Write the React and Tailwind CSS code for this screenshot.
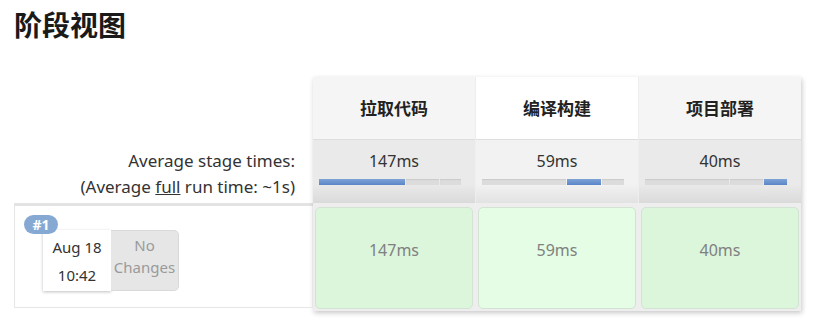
import React from 'react';

const stages = [
  {
    name: '拉取代码',
    avg: '147ms',
    time: '147ms',
    head: 'bg-[#f5f5f5]',
    avgBg: 'bg-gradient-to-b from-[#eaeaea] from-70% to-[#dadada]',
    cell: 'bg-[#dcf6dc]',
    bar: [['blue', 86], ['gray', 33], ['gray', 21]],
  },
  {
    name: '编译构建',
    avg: '59ms',
    time: '59ms',
    head: 'bg-white',
    avgBg: 'bg-gradient-to-b from-[#f2f2f2] from-70% to-[#e2e2e2]',
    cell: 'bg-[#e4fde4]',
    bar: [['gray', 85], ['blue', 34], ['gray', 22]],
  },
  {
    name: '项目部署',
    avg: '40ms',
    time: '40ms',
    head: 'bg-[#f5f5f5]',
    avgBg: 'bg-gradient-to-b from-[#eaeaea] from-70% to-[#dadada]',
    cell: 'bg-[#dcf6dc]',
    bar: [['gray', 84], ['gray', 33], ['blue', 23]],
  },
];

const latin = { fontFamily: '"Noto Sans", "Noto Sans CJK SC", sans-serif' };
const cjk = { fontFamily: '"Noto Sans CJK SC", "Noto Sans", sans-serif' };

const Bar = ({ parts }) => (
  <div className="flex h-[6px] w-[142px] gap-px">
    {parts.map(([kind, w], i) => (
      <div
        key={i}
        style={{ width: w }}
        className={
          kind === 'blue'
            ? 'h-full bg-gradient-to-b from-[#7ea3d6] to-[#5a85c8]'
            : 'h-full bg-[#dcdcdc] shadow-[inset_0_1px_1px_rgba(0,0,0,0.08)]'
        }
      />
    ))}
  </div>
);

const App = () => {
  return (
    <div className="w-[830px] h-[333px] bg-white overflow-hidden pl-[14px] pt-[4px] text-[#333]" style={latin}>
      <h1 className="text-[28px] leading-[40px] font-bold text-[#1a1a1a] mb-[33px]" style={cjk}>
        阶段视图
      </h1>

      <div className="flex">
        {/* left labels */}
        <div className="w-[299px] flex flex-col">
          <div className="h-[62px]" />
          <div className="h-[64px] flex flex-col items-end justify-center pr-[18px] text-[17px] leading-[26px] pt-[6px]">
            <div>Average stage times:</div>
            <div>
              (Average <span className="underline">full</span> run time: ~1s)
            </div>
          </div>
          <div className="border-t-[3px] border-[#e3e3e3]">
            <div className="h-[102px] border border-[#e6e6e6] border-t-0 relative">
              <div className="absolute left-[9px] top-[9px] z-10 h-[19px] w-[34px] rounded-full bg-[#86a9d3] text-white text-[14px] font-bold leading-[19px] text-center">
                #1
              </div>
              <div className="flex pl-[28px] pt-[24px]">
                <div className="w-[68px] h-[61px] bg-white shadow-[0_1px_3px_rgba(0,0,0,0.25)] flex flex-col items-center justify-center text-[15px] leading-[28px] text-[#333]">
                  <div>Aug 18</div>
                  <div>10:42</div>
                </div>
                <div className="w-[68px] h-[61px] bg-[#e6e6e6] border border-[#d9d9d9] border-l-0 rounded-r-[5px] flex flex-col items-center justify-start pt-[3px] text-[15px] leading-[22px] text-[#9a9a9a]">
                  <div>No</div>
                  <div>Changes</div>
                </div>
              </div>
            </div>
          </div>
        </div>

        {/* stage table */}
        <div className="flex w-[488px] bg-[#eeeeee] shadow-[1px_2px_5px_rgba(0,0,0,0.22)] gap-px">
          {stages.map((s) => (
            <div key={s.name} className="flex-1 flex flex-col">
              <div className={`h-[62px] flex items-center justify-center ${s.head}`}>
                <span className="text-[17px] font-bold text-[#222]" style={cjk}>
                  {s.name}
                </span>
              </div>
              <div className={`h-[64px] flex flex-col items-center pt-[10px] border-t border-[#dedede] ${s.avgBg}`}>
                <div className="text-[16px] leading-[22px] text-[#333]">{s.avg}</div>
                <div className="mt-[7px] self-start ml-[6px]">
                  <Bar parts={s.bar} />
                </div>
              </div>
              <div className="h-[108px] px-[2px] pt-[4px] pb-[2px] bg-[#eeeeee]">
                <div className={`h-[102px] rounded-[5px] border border-[#d3e3d3] flex items-center justify-center pb-[16px] text-[16px] text-[#808080] ${s.cell}`}>
                  {s.time}
                </div>
              </div>
            </div>
          ))}
        </div>
      </div>
    </div>
  );
};

export default App;
